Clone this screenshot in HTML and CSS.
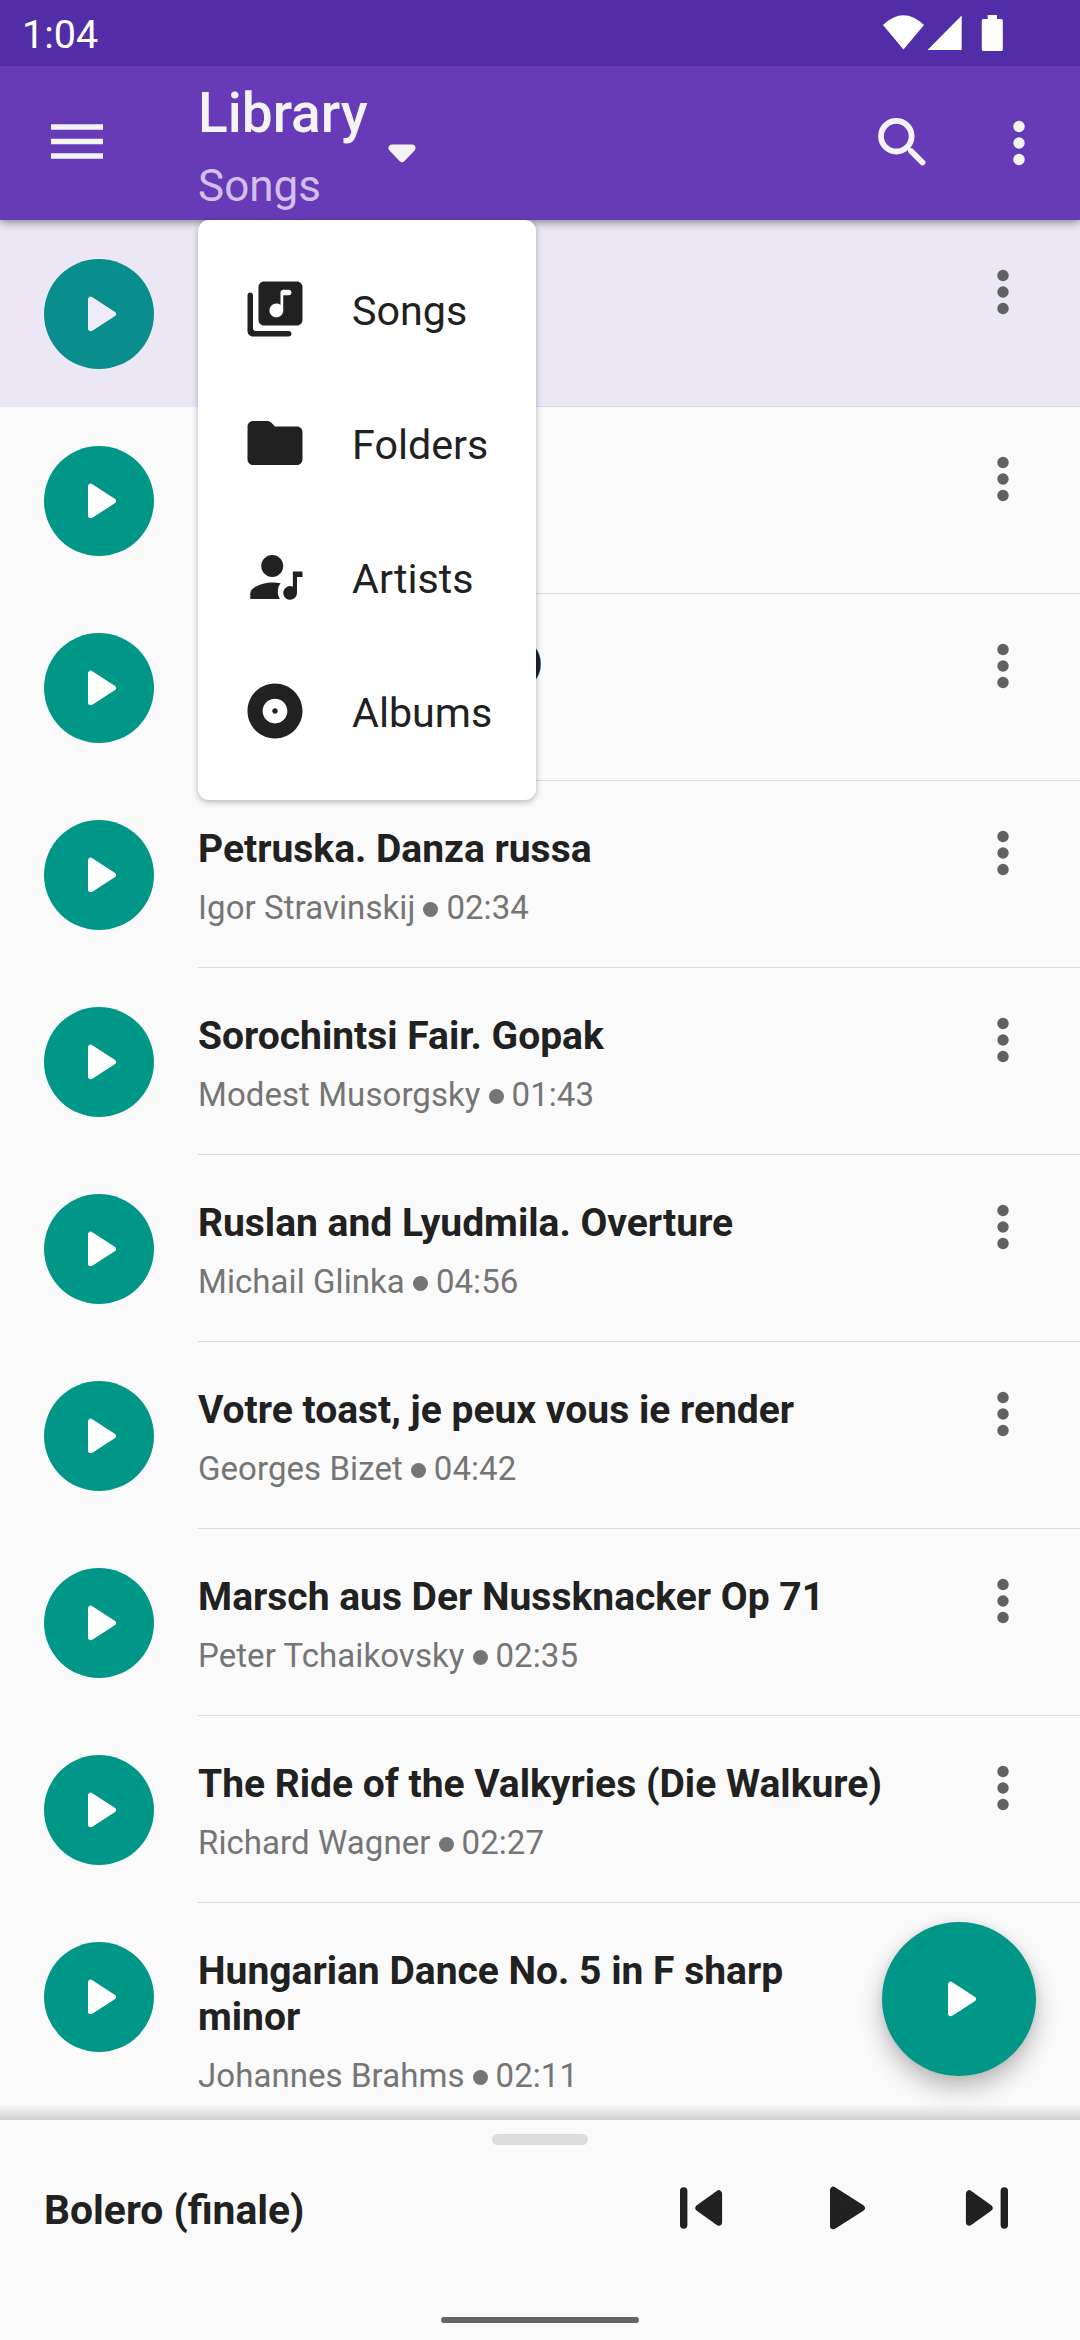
FILE: index.html
```html
<!DOCTYPE html>
<html lang="en">
<head>
<meta charset="utf-8">
<title>Library</title>
<link rel="stylesheet" href="styles.css">
</head>
<body>
<svg class="sprite" aria-hidden="true">
  <symbol id="play" viewBox="-33 -33 66 66"><path d="M-8.2-14.5V14.5L14.2 0Z" fill="currentColor" stroke="currentColor" stroke-width="5.6" stroke-linejoin="round"/></symbol>
  <symbol id="more" viewBox="-33 -33 66 66"><g fill="currentColor"><circle cy="-16.5" r="5.7"/><circle r="5.7"/><circle cy="16.5" r="5.7"/></g></symbol>
</svg>
<div class="screen">
  <div class="status">
    <span class="clock">1:04</span>
    <svg class="status-icons" width="120" height="36" viewBox="0 0 120 36" fill="#fff">
      <path d="M0 10Q20.5-9.5 41 10L20.5 34.5Z"/>
      <path d="M44.5 35L78.7 .5V35Z"/>
      <path d="M104.700 0h9.300v4h4.300q1.500 0 1.500 1.500v29q0 1.500-1.500 1.500h-18q-1.500 0-1.500-1.500V5.500q0-1.500 1.500-1.500h4.400z"/>
    </svg>
  </div>
  <header class="appbar">
    <svg class="menu-icon" width="52" height="36" viewBox="0 0 52 36"><path d="M0 3H52M0 17.500H52M0 32H52" stroke="#f3f3f3" stroke-width="5.700"/></svg>
    <div class="heading">
      <div class="heading-title">Library</div>
      <div class="heading-sub">Songs</div>
    </div>
    <svg class="caret" width="28" height="20" viewBox="0 0 28 20"><path d="M4 4H24L14 14.500Z" fill="#f3f3f3" stroke="#f3f3f3" stroke-width="7" stroke-linejoin="round"/></svg>
    <svg class="search" width="48" height="48" viewBox="0 0 48 48" fill="none" stroke="#f3f3f3" stroke-width="5.800"><circle cx="18.300" cy="18.200" r="15.300"/><path d="M28 28L32 32" stroke-width="3"/><path d="M33 33L44.500 44.500" stroke-linecap="round"/></svg>
    <svg class="icon appbar-more"><use href="#more"/></svg>
    <nav class="dropdown">
      <div class="option"><svg width="66" height="66" viewBox="0 0 24 24" fill="#212121"><path d="M20 2H8c-1.100 0-2 .9-2 2v12c0 1.100.9 2 2 2h12c1.100 0 2-.9 2-2V4c0-1.100-.9-2-2-2zm-3 5h-2v5.500c0 1.380-1.120 2.500-2.500 2.500S10 13.880 10 12.500s1.120-2.500 2.500-2.500c.57 0 1.080.19 1.500.51V6c0-.55.45-1 1-1h2c.55 0 1 .45 1 1s-.45 1-1 1zM3 6c-.55 0-1 .45-1 1v13c0 1.100.9 2 2 2h13c.55 0 1-.45 1-1s-.45-1-1-1H5c-.55 0-1-.45-1-1V7c0-.55-.45-1-1-1z"/></svg><span>Songs</span></div>
      <div class="option"><svg width="66" height="66" viewBox="0 0 24 24" fill="#212121"><path d="M10.590 4.590C10.210 4.210 9.700 4 9.170 4H4c-1.100 0-1.990.9-1.990 2L2 18c0 1.100.9 2 2 2h16c1.100 0 2-.9 2-2V8c0-1.100-.9-2-2-2h-8l-1.410-1.410z"/></svg><span>Folders</span></div>
      <div class="option"><svg width="66" height="66" viewBox="0 0 24 24" fill="#212121"><path d="M11 4C8.790 4 7 5.790 7 8s1.790 4 4 4 4-1.790 4-4-1.790-4-4-4zM11 14c-2.670 0-8 1.340-8 4v2h10.800c-1.120-1.700-1.020-4.160.26-5.700C12.940 14.080 11.850 14 11 14zM22 10h-3.500v5.500a2.500 2.500 0 1 0 1.500 2.300V12H22z"/></svg><span>Artists</span></div>
      <div class="option"><svg width="66" height="66" viewBox="0 0 24 24" fill="#212121"><path d="M12 2C6.480 2 2 6.480 2 12s4.480 10 10 10 10-4.480 10-10S17.520 2 12 2zm0 14.500c-2.490 0-4.500-2.010-4.500-4.500S9.510 7.500 12 7.500s4.500 2.010 4.500 4.500-2.010 4.500-4.500 4.500zm0-5.500c-.55 0-1 .45-1 1s.45 1 1 1 1-.45 1-1-.45-1-1-1z"/></svg><span>Albums</span></div>
    </nav>
  </header>
  <main class="list">
    <div class="row selected"><div class="disc"><svg class="icon"><use href="#play"/></svg></div><div class="body"><div class="text"></div><svg class="icon more"><use href="#more"/></svg></div></div>
    <div class="row"><div class="disc"><svg class="icon"><use href="#play"/></svg></div><div class="body"><div class="text"></div><svg class="icon more"><use href="#more"/></svg></div></div>
    <div class="row"><div class="disc"><svg class="icon"><use href="#play"/></svg></div><div class="body"><div class="text"><div class="title title-tail">)</div></div><svg class="icon more"><use href="#more"/></svg></div></div>
    <div class="row"><div class="disc"><svg class="icon"><use href="#play"/></svg></div><div class="body"><div class="text"><div class="title">Petruska. Danza russa</div><div class="meta">Igor Stravinskij<i class="dot"></i>02:34</div></div><svg class="icon more"><use href="#more"/></svg></div></div>
    <div class="row"><div class="disc"><svg class="icon"><use href="#play"/></svg></div><div class="body"><div class="text"><div class="title">Sorochintsi Fair. Gopak</div><div class="meta">Modest Musorgsky<i class="dot"></i>01:43</div></div><svg class="icon more"><use href="#more"/></svg></div></div>
    <div class="row"><div class="disc"><svg class="icon"><use href="#play"/></svg></div><div class="body"><div class="text"><div class="title">Ruslan and Lyudmila. Overture</div><div class="meta">Michail Glinka<i class="dot"></i>04:56</div></div><svg class="icon more"><use href="#more"/></svg></div></div>
    <div class="row"><div class="disc"><svg class="icon"><use href="#play"/></svg></div><div class="body"><div class="text"><div class="title">Votre toast, je peux vous ie render</div><div class="meta">Georges Bizet<i class="dot"></i>04:42</div></div><svg class="icon more"><use href="#more"/></svg></div></div>
    <div class="row"><div class="disc"><svg class="icon"><use href="#play"/></svg></div><div class="body"><div class="text"><div class="title">Marsch aus Der Nussknacker Op 71</div><div class="meta">Peter Tchaikovsky<i class="dot"></i>02:35</div></div><svg class="icon more"><use href="#more"/></svg></div></div>
    <div class="row"><div class="disc"><svg class="icon"><use href="#play"/></svg></div><div class="body"><div class="text"><div class="title">The Ride of the Valkyries (Die Walkure)</div><div class="meta">Richard Wagner<i class="dot"></i>02:27</div></div><svg class="icon more"><use href="#more"/></svg></div></div>
    <div class="row last"><div class="disc"><svg class="icon"><use href="#play"/></svg></div><div class="body"><div class="text"><div class="title">Hungarian Dance No. 5 in F sharp<br>minor</div><div class="meta">Johannes Brahms<i class="dot"></i>02:11</div></div></div></div>
    <div class="fab"><svg class="icon"><use href="#play"/></svg></div>
  </main>
  <footer class="player">
    <div class="handle"></div>
    <div class="now">
      <div class="now-title">Bolero (finale)</div>
      <div class="controls">
        <svg width="66" height="66" viewBox="-33 -33 66 66" stroke="#212121" fill="#212121" stroke-linejoin="round" stroke-linecap="round"><path d="M-17.300-17V17" stroke-width="7.400"/><path d="M17.700-14.300V14.300L-2.200 0Z" stroke-width="6.800"/></svg>
        <svg width="66" height="66" viewBox="-33 -33 66 66" stroke="#212121" fill="#212121" stroke-linejoin="round"><path d="M-10.700-18V18L17.600 0Z" stroke-width="6.600"/></svg>
        <svg width="66" height="66" viewBox="-33 -33 66 66" stroke="#212121" fill="#212121" stroke-linejoin="round" stroke-linecap="round"><path d="M17.300-17V17" stroke-width="7.400"/><path d="M-17.700-14.300V14.300L2.200 0Z" stroke-width="6.800"/></svg>
      </div>
    </div>
    <div class="gesture"></div>
  </footer>
</div>
</body>
</html>
```
FILE: styles.css
```css
* { box-sizing: border-box; }
body { margin: 0; background: #fafafa; font-family: Roboto, "Noto Sans", sans-serif; color: #212121; }
svg { display: block; flex: none; overflow: visible; }
.sprite { position: absolute; width: 0; height: 0; }
.screen { width: 1080px; height: 2340px; display: flex; flex-direction: column; overflow: hidden; background: #fafafa; }
.icon { width: 66px; height: 66px; }

.status { position: relative; z-index: 4; height: 66px; flex: none; background: #512da8; display: flex; justify-content: space-between; padding: 15px 77px 0 22px; }
.clock { color: #fff; font-size: 39.5px; line-height: 40px; }

.appbar { position: relative; z-index: 3; height: 154px; flex: none; background: #673ab7; display: flex; padding-left: 51px; box-shadow: 0 2px 9px rgba(0, 0, 0, .45); }
.menu-icon { margin-top: 58px; }
.heading { margin-left: 95px; padding-top: 15px; white-space: nowrap; }
.heading-title { font-size: 55px; font-weight: 500; line-height: 64px; color: #f3f3f3; }
.heading-sub { font-size: 44px; line-height: 52px; margin-top: 15px; height: 52px; color: #d1c0ea; }
.caret { margin: 78px 0 0 20px; }
.search { margin: 52px 0 0 auto; }
.appbar-more { margin: 44px 28px 0 60px; color: #f3f3f3; }

.dropdown { position: absolute; left: 198px; top: 154px; width: 338px; height: 580px; padding: 22px 44px; background: #fff; border-radius: 11px; box-shadow: 0 2px 6px rgba(0, 0, 0, .28); }
.option { height: 134px; display: flex; align-items: center; gap: 44px; font-size: 41.25px; line-height: 48px; white-space: nowrap; }
.option span { padding-top: 3px; }

.list { position: relative; height: 1900px; flex: none; overflow: hidden; }
.row { height: 187px; display: flex; gap: 44px; padding-left: 44px; }
.row.last { height: 234px; }
.disc { width: 110px; height: 110px; flex: none; margin-top: 39px; border-radius: 50%; background: #009688; color: #fff; display: flex; align-items: center; justify-content: center; }
.selected { background: #ebe7f5; }
.selected .disc { background: #0a8d8d; color: #f0ebf8; }
.body { flex: 1; display: flex; border-bottom: 1px solid #dadada; }
.last .body { border-bottom: 0; }
.text { flex: 1; padding-top: 45px; white-space: nowrap; }
.title { font-size: 39px; font-weight: 700; line-height: 46px; }
.title-tail { padding-left: 331px; }
.meta { display: flex; align-items: center; margin-top: 17px; font-size: 33px; line-height: 38px; letter-spacing: .07px; color: #757575; }
.dot { width: 15px; height: 15px; margin: 3px 8px 0 8px; border-radius: 50%; background: #757575; }
.more { margin: 39px 44px 0 0; color: #616161; }

.fab { position: absolute; left: 882px; top: 1702px; width: 154px; height: 154px; border-radius: 50%; background: #009688; color: #fff; display: flex; align-items: center; justify-content: center; box-shadow: 0 12px 24px rgba(0, 0, 0, .26), 0 0 8px rgba(0, 0, 0, .08); }

.player { position: relative; z-index: 2; height: 220px; display: flex; flex-direction: column; align-items: center; background: #fafafa; }
.player::before { content: ""; position: absolute; left: 0; right: 0; bottom: 100%; height: 16px; background: linear-gradient(to bottom, rgba(0, 0, 0, 0), rgba(0, 0, 0, .17)); }
.handle { width: 96px; height: 11px; margin-top: 14px; border-radius: 5.5px; background: #dcdcdc; }
.now { align-self: stretch; height: 110px; margin-top: 8px; display: flex; justify-content: space-between; align-items: center; padding: 0 60px 0 44px; }
.now-title { font-size: 40.8px; font-weight: 700; line-height: 48px; padding-top: 3px; }
.controls { display: flex; gap: 77px; }
.gesture { width: 198px; height: 6px; margin-top: 54px; border-radius: 3px; background: #666; }
```
